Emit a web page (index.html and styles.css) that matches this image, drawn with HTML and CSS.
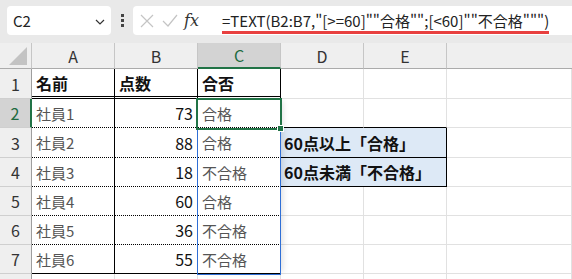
FILE: index.html
```html
<!DOCTYPE html>
<html lang="ja">
<head>
  <meta charset="UTF-8">
  <title>TEXT関数</title>
  <link rel="stylesheet" href="styles.css">
</head>
<body>
  <div class="topbar">
    <div class="namebox">
      <span>C2</span>
      <svg class="chev" width="10" height="6" viewBox="0 0 10 6"><path d="M1 1l4 4 4-4" fill="none" stroke="#333" stroke-width="1.2"/></svg>
    </div>
    <div class="dots"><i></i><i></i><i></i></div>
    <div class="formulabox">
      <svg class="ico" width="14" height="14" viewBox="0 0 14 14"><path d="M1 1l12 12M13 1L1 13" stroke="#c4c4c4" stroke-width="1.2"/></svg>
      <svg class="ico" width="16" height="14" viewBox="0 0 16 14"><path d="M1 7l5 5L15 1" fill="none" stroke="#c4c4c4" stroke-width="1.2"/></svg>
      <span class="fx">fx</span>
      <span class="formula">=TEXT(B2:B7,"[&gt;=60]""合格"";[&lt;60]""不合格""")</span>
    </div>
  </div>

  <div class="sheet">
    <div class="hd corner"><span class="tri"></span></div>
    <div class="hd col">A</div>
    <div class="hd col">B</div>
    <div class="hd col active-col">C</div>
    <div class="hd col">D</div>
    <div class="hd col">E</div>
    <div class="hd col last"></div>

    <div class="hd row">1</div>
    <div class="c t head r1">名前</div>
    <div class="c t head r1">点数</div>
    <div class="c t head r1">合否</div>
    <div class="c"></div>
    <div class="c"></div>
    <div class="c"></div>

    <div class="hd row active-row">2</div>
    <div class="c t txt dot">社員1</div>
    <div class="c t num dot">73</div>
    <div class="c t txt dot">合格</div>
    <div class="c box-top"></div>
    <div class="c box-top"></div>
    <div class="c"></div>

    <div class="hd row">3</div>
    <div class="c t txt dot">社員2</div>
    <div class="c t num dot">88</div>
    <div class="c t txt dot">合格</div>
    <div class="c note">60点以上「合格」</div>
    <div class="c"></div>

    <div class="hd row">4</div>
    <div class="c t txt dot">社員3</div>
    <div class="c t num dot">18</div>
    <div class="c t txt dot">不合格</div>
    <div class="c note">60点未満「不合格」</div>
    <div class="c"></div>

    <div class="hd row">5</div>
    <div class="c t txt dot">社員4</div>
    <div class="c t num dot">60</div>
    <div class="c t txt dot">合格</div>
    <div class="c"></div>
    <div class="c"></div>
    <div class="c"></div>

    <div class="hd row">6</div>
    <div class="c t txt dot">社員5</div>
    <div class="c t num dot">36</div>
    <div class="c t txt dot">不合格</div>
    <div class="c"></div>
    <div class="c"></div>
    <div class="c"></div>

    <div class="hd row">7</div>
    <div class="c t txt bot">社員6</div>
    <div class="c t num bot">55</div>
    <div class="c t txt bot">不合格</div>
    <div class="c"></div>
    <div class="c"></div>
    <div class="c"></div>

    <div class="hd row"></div>
    <div class="c"></div>
    <div class="c"></div>
    <div class="c"></div>
    <div class="c"></div>
    <div class="c"></div>
    <div class="c"></div>

    <div class="spill"></div>
    <div class="select"><span class="handle"></span></div>
  </div>
</body>
</html>
```

FILE: styles.css
```css
body {
  margin: 0;
  width: 572px;
  height: 279px;
  overflow: hidden;
  background: #fff;
  font-family: "Noto Sans CJK JP", "Noto Sans", sans-serif;
}
.topbar {
  height: 43px;
  background: #e9e9e9;
  display: flex;
  align-items: flex-start;
  padding: 6px 0 0 7px;
  box-sizing: border-box;
}
.namebox {
  width: 104px;
  height: 29px;
  background: #fff;
  border-radius: 4px;
  display: flex;
  align-items: center;
  justify-content: space-between;
  padding: 0 6px 0 6px;
  box-sizing: border-box;
  font-size: 15px;
  color: #222;
}
.namebox .chev { margin-top: 2px; }
.dots {
  width: 22px;
  height: 29px;
  display: flex;
  flex-direction: column;
  align-items: center;
  justify-content: center;
  gap: 2px;
}
.dots i {
  width: 3px;
  height: 3px;
  background: #444;
}
.formulabox {
  flex: 1;
  height: 29px;
  background: #fff;
  border-radius: 4px 0 0 4px;
  display: flex;
  align-items: center;
  padding-left: 7px;
  position: relative;
}
.ico { margin-right: 8px; }
.fx {
  font-family: "DejaVu Serif", serif;
  font-style: italic;
  font-size: 16px;
  color: #333;
  width: 26px;
  margin-left: -2px;
}
.formula {
  margin-left: 12px;
  font-size: 15px;
  color: #222;
  white-space: nowrap;
  border-bottom: 3px solid #e8403f;
  line-height: 20px;
  margin-top: 3px;
}

.sheet {
  position: relative;
  display: grid;
  grid-template-columns: 32px 83px 83px 83px 83px 83px 1fr;
  grid-template-rows: 26px 30px 29px 30px 29px 29px 29px 29px 10px;
}
.hd {
  background: #efefef;
  color: #333;
  font-size: 16px;
  display: flex;
  align-items: center;
  justify-content: center;
  box-sizing: border-box;
}
.hd.col {
  border-right: 1px solid #c6c6c6;
  border-bottom: 1px solid #ababab;
}
.hd.col.last { border-right: none; }
.hd.corner {
  border-right: 1px solid #c6c6c6;
  border-bottom: 1px solid #ababab;
  position: relative;
}
.tri {
  position: absolute;
  right: 4px;
  bottom: 3px;
  width: 18px;
  height: 18px;
  background: #c3c3c3;
  clip-path: polygon(100% 0, 100% 100%, 0 100%);
}
.hd.row {
  border-right: 1px solid #9e9e9e;
  border-bottom: 1px solid #cfcfcf;
}
.active-col {
  background: #d3d3d3;
  border-bottom: 2px solid #217346 !important;
  color: #1e6b40;
}
.active-row {
  background: #d3d3d3;
  border-right: 2px solid #217346 !important;
  color: #1e6b40;
}

.c {
  box-sizing: border-box;
  border-right: 1px solid #e1e1e1;
  border-bottom: 1px solid #e1e1e1;
  font-size: 15px;
  display: flex;
  align-items: center;
  white-space: nowrap;
  min-width: 0;
}
.t {
  border-right: 1px solid #000;
  padding: 0 4px;
}
.head {
  font-weight: bold;
  color: #111;
  font-size: 16px;
}
.r1 { border-bottom: 3px double #000; }
.txt { color: #555; }
.num {
  justify-content: flex-end;
  color: #111;
  font-size: 16px;
}
.dot { border-bottom: 1px dotted #000; }
.bot { border-bottom: 1px solid #000; }
.box-top { border-bottom: 1px solid #000; }
.note {
  grid-column: span 2;
  background: #dde9f6;
  border-bottom: 1px solid #000;
  border-right: 1px solid #000;
  font-weight: bold;
  font-size: 16px;
  color: #111;
  padding-left: 3px;
}

.spill {
  position: absolute;
  left: 197px;
  top: 55px;
  width: 84px;
  height: 177px;
  box-sizing: border-box;
  border: 1px solid #2f6fd6;
  box-shadow: 5px 0 6px -3px rgba(0, 0, 0, 0.12);
}
.select {
  position: absolute;
  left: 196px;
  top: 55px;
  width: 86px;
  height: 32px;
  box-sizing: border-box;
  border: 2px solid #217346;
}
.handle {
  position: absolute;
  right: -4px;
  bottom: -4px;
  width: 5px;
  height: 5px;
  background: #217346;
  border: 1px solid #fff;
}
```
